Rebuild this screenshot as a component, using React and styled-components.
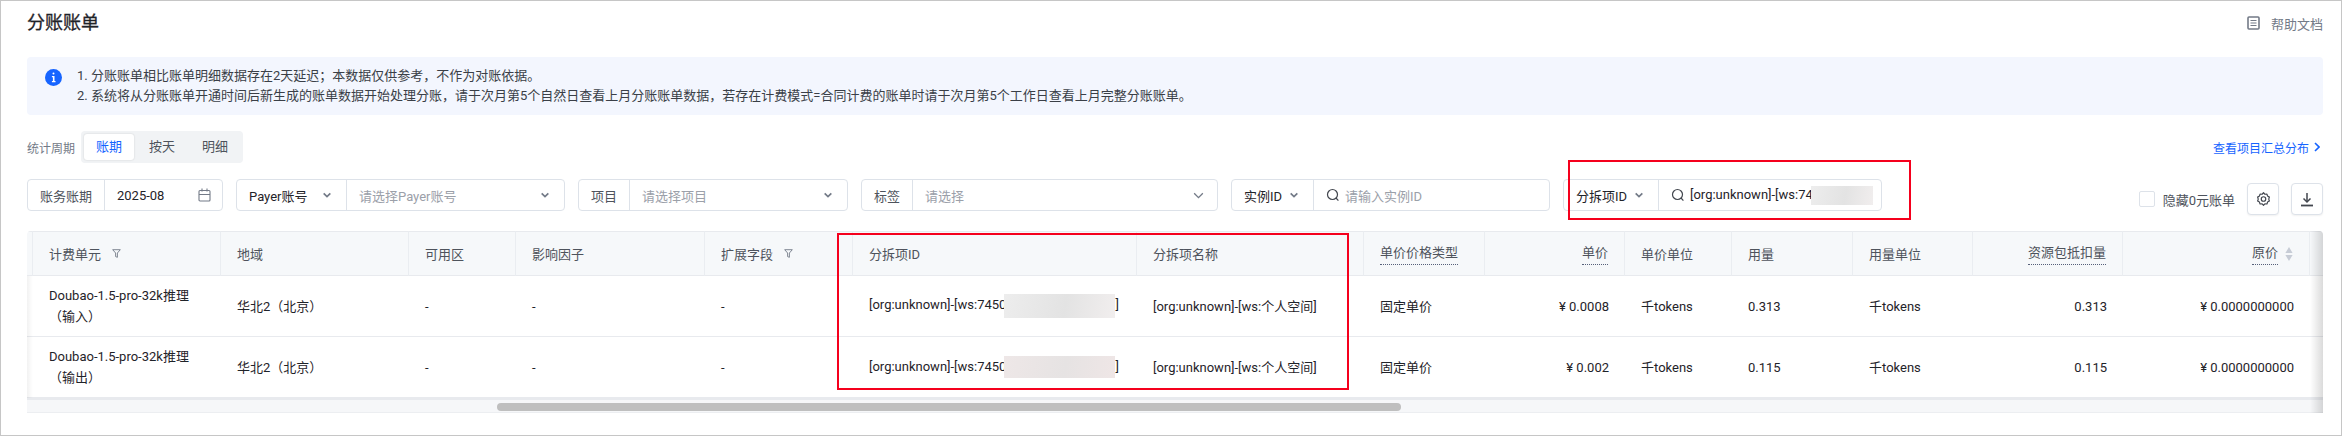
import React from "react";
import styled, { createGlobalStyle } from "styled-components";

const Global = createGlobalStyle`
  html, body { margin: 0; padding: 0; background: #fff; }
  body { font-family: Roboto, "Noto Sans CJK SC", sans-serif; font-size: 13px; color: #1f2329; }
  * { box-sizing: border-box; }
`;

const Page = styled.div`
  position: relative;
  width: 2342px;
  height: 436px;
  border: 1px solid #c6c6c6;
  padding: 0 18px 0 26px;
  overflow: hidden;
`;
const Header = styled.header`
  display: flex;
  align-items: center;
  justify-content: space-between;
  height: 44px;
`;
const Title = styled.h1`
  margin: 0;
  font-size: 18px;
  font-weight: 400;
  line-height: 24px;
  color: #1f2329;
  -webkit-text-stroke: 0.3px #1f2329;
`;
const HelpLink = styled.a`
  display: flex;
  align-items: center;
  gap: 11px;
  color: #737a87;
  font-size: 13px;
`;
const Alert = styled.section`
  display: flex;
  gap: 15px;
  height: 58px;
  margin-top: 12px;
  padding: 9px 18px;
  background: #f3f6fe;
  border-radius: 4px;
`;
const AlertIcon = styled.svg`
  width: 17px;
  height: 17px;
  margin-top: 3px;
  flex: none;
`;
const AlertText = styled.div`
  line-height: 20px;
  color: #3a3f47;
  font-size: 13px;
`;
const Toolbar = styled.div`
  display: flex;
  align-items: center;
  justify-content: space-between;
  height: 32px;
  margin-top: 16px;
`;
const PeriodGroup = styled.div`
  display: flex;
  align-items: center;
  gap: 6px;
`;
const PeriodLabel = styled.span`
  font-size: 12px;
  color: #737a87;
`;
const Segment = styled.div`
  display: flex;
  gap: 3px;
  height: 32px;
  padding: 3px;
  background: #f1f3f5;
  border-radius: 4px;
`;
const SegmentTab = styled.div`
  width: 50px;
  height: 26px;
  line-height: 26px;
  text-align: center;
  border-radius: 3px;
  color: ${(p) => (p.$active ? "#1664ff" : "#4e535c")};
  background: ${(p) => (p.$active ? "#fff" : "transparent")};
  box-shadow: ${(p) => (p.$active ? "0 0 2px rgba(0,0,0,.16)" : "none")};
`;
const SummaryLink = styled.a`
  display: flex;
  align-items: center;
  gap: 5px;
  font-size: 12px;
  color: #1664ff;
  margin-right: 3px;
`;
const FilterRow = styled.div`
  display: flex;
  align-items: flex-start;
  justify-content: space-between;
  height: 36px;
  margin-top: 16px;
`;
const Filters = styled.div`
  display: flex;
  gap: 13px;
`;
const FilterGroup = styled.div`
  display: flex;
  width: ${(p) => p.$width}px;
  height: 32px;
  border: 1px solid #dde2e9;
  border-radius: 4px;
  background: #fff;
`;
const FilterLabel = styled.div`
  display: flex;
  align-items: center;
  justify-content: space-between;
  flex: none;
  width: ${(p) => p.$width}px;
  padding: 0 14px 0 12px;
  border-right: 1px solid #dde2e9;
  white-space: nowrap;
  color: ${(p) => (p.$muted ? "#4e535c" : "#1f2329")};
`;
const FilterValue = styled.div`
  display: flex;
  align-items: center;
  justify-content: space-between;
  flex: 1;
  min-width: 0;
  padding: 0 ${(p) => p.$pr ?? 14}px 0 12px;
  white-space: nowrap;
  color: #1f2329;
`;
const Placeholder = styled.span`
  color: #9ba0a9;
`;
const SearchWrap = styled.span`
  display: flex;
  align-items: center;
  gap: 5px;
  color: #1f2329;
`;
const Patch = styled.span`
  display: inline-block;
  flex: none;
  vertical-align: middle;
  width: ${(p) => p.$w}px;
  height: ${(p) => p.$h}px;
  margin-left: -2px;
  background: ${(p) =>
    p.$tint
      ? "linear-gradient(100deg,#eee7e7,#e6e3e3 55%,#efe6e6)"
      : "linear-gradient(100deg,#ededed,#e3e3e3 55%,#f1eeee)"};
`;
const TableTools = styled.div`
  display: flex;
  align-items: center;
  margin-top: 4px;
  height: 32px;
`;
const HideCheck = styled.label`
  display: flex;
  align-items: center;
  gap: 8px;
  margin-right: 12px;
  color: #4e535c;
`;
const CheckBox = styled.span`
  width: 16px;
  height: 16px;
  border: 1px solid #dde2e9;
  border-radius: 2px;
`;
const IconButton = styled.button`
  display: flex;
  align-items: center;
  justify-content: center;
  width: 32px;
  height: 32px;
  padding: 0;
  margin-left: ${(p) => p.$ml || 0}px;
  border: 1px solid #dde2e9;
  border-radius: 4px;
  background: #fff;
  box-shadow: 0 1px 2px rgba(0, 0, 0, 0.06);
`;
const TableWrap = styled.div`
  position: relative;
  margin-top: 16px;
  border-radius: 4px 4px 0 0;
  overflow: hidden;
`;
const Table = styled.table`
  width: 2296px;
  table-layout: fixed;
  border-collapse: separate;
  border-spacing: 0;
`;
const Th = styled.th`
  height: 45px;
  padding: 0 ${(p) => (p.$edge ? 0 : 16)}px;
  font-size: 13px;
  font-weight: 400;
  color: #4e535c;
  background: #f6f8fa;
  text-align: ${(p) => p.$align || "left"};
  border-top: 1px solid #e8eaee;
  border-bottom: 1px solid #e8eaee;
  border-right: ${(p) => (p.$last ? "none" : "1px solid #eaedf1")};
  white-space: nowrap;
`;
const Td = styled.td`
  height: 61px;
  padding: 0 16px;
  font-size: 13px;
  line-height: 21px;
  color: #1f2329;
  text-align: ${(p) => p.$align || "left"};
  border-bottom: 1px solid #e8eaee;
  white-space: ${(p) => (p.$wrap ? "normal" : "nowrap")};
  overflow: hidden;
`;
const EdgeTd = styled.td`
  padding: 0;
  border-bottom: 1px solid #e8eaee;
`;
const HeadInner = styled.span`
  display: inline-flex;
  align-items: center;
  gap: 11px;
`;
const Tip = styled.span`
  display: inline-block;
  line-height: 20px;
  padding-bottom: 1px;
  border-bottom: 1px dotted #56607a;
`;
const SortIcon = styled.svg`
  width: 8px;
  height: 14px;
  margin-left: -4px;
`;
const Track = styled.div`
  height: 15px;
  padding: 3px 0 0 470px;
  background: #f6f7f9;
  border-top: 2px solid #e8eaee;
  border-bottom: 1px solid #eceef1;
`;
const Thumb = styled.div`
  width: 904px;
  height: 8px;
  border-radius: 4px;
  background: #bfbfbf;
`;
const ShadowLeft = styled.div`
  position: absolute;
  left: 0;
  top: 45px;
  bottom: 15px;
  width: 6px;
  background: linear-gradient(90deg, rgba(0, 0, 0, 0.05), transparent);
`;
const ShadowRight = styled.div`
  position: absolute;
  right: 0;
  top: 0;
  bottom: 0;
  width: 13px;
  background: linear-gradient(270deg, rgba(0, 0, 0, 0.14), transparent);
`;
const FilterHighlight = styled.div`
  position: absolute;
  left: 1567px;
  top: 159px;
  width: 343px;
  height: 60px;
  border: 2px solid #f5001d;
`;
const ColumnHighlight = styled.div`
  position: absolute;
  left: 836px;
  top: 232px;
  width: 512px;
  height: 157px;
  border: 2px solid #f5001d;
`;

const Chevron = ({ size = 10, thin }) => (
  <svg width={size} height={size} viewBox="0 0 12 12" fill="none">
    <path d="M2 4l4 4 4-4" stroke="#737a87" strokeWidth={thin ? 1.2 : 2} />
  </svg>
);
const SearchIcon = () => (
  <svg width="14" height="14" viewBox="0 0 14 14" fill="none" stroke="#42464e" strokeWidth="1.2">
    <circle cx="6.5" cy="6.5" r="5" />
    <path d="M10 10l2.4 2.6" />
  </svg>
);
const Calendar = () => (
  <svg width="13" height="14" viewBox="0 0 13 14" fill="none" stroke="#737a87" strokeWidth="1.1">
    <rect x="1" y="2.5" width="11" height="10.5" rx="1" />
    <path d="M1 6.5h11M4 .5v3M9 .5v3" />
  </svg>
);
const Funnel = () => (
  <svg width="9" height="9" viewBox="0 0 9 9" fill="none" stroke="#737a87" strokeWidth="0.9">
    <path d="M.7.7h7.6L5.4 4v4.3L3.6 7.6V4z" />
  </svg>
);

const columns = [
  { w: 6, edge: true },
  { w: 188, title: "计费单元", filter: true },
  { w: 188, title: "地域" },
  { w: 107, title: "可用区" },
  { w: 189, title: "影响因子" },
  { w: 148, title: "扩展字段", filter: true },
  { w: 284, title: "分拆项ID" },
  { w: 227, title: "分拆项名称" },
  { w: 121, title: "单价价格类型", tip: true },
  { w: 140, title: "单价", tip: true, align: "right" },
  { w: 107, title: "单价单位" },
  { w: 121, title: "用量" },
  { w: 120, title: "用量单位" },
  { w: 150, title: "资源包抵扣量", tip: true, align: "right" },
  { w: 187, title: "原价", tip: true, sort: true, align: "right" },
  { w: 13, edge: true, last: true },
];

const rows = [
  { unit: "Doubao-1.5-pro-32k推理（输入）", price: "¥ 0.0008", usage: "0.313", h: 24 },
  { unit: "Doubao-1.5-pro-32k推理（输出）", price: "¥ 0.002", usage: "0.115", h: 22, tint: true },
];

export default function App() {
  return (
    <Page>
      <Global />
      <Header>
        <Title>分账账单</Title>
        <HelpLink>
          <svg width="13" height="14" viewBox="0 0 13 14" fill="none" stroke="#737a87">
            <rect x="1" y="1" width="11" height="12" rx="1" strokeWidth="1.6" />
            <path d="M3.5 4.5h6M3.5 7h6M3.5 9.5h6" strokeWidth="1.1" />
          </svg>
          帮助文档
        </HelpLink>
      </Header>
      <Alert>
        <AlertIcon viewBox="0 0 17 17">
          <circle cx="8.5" cy="8.5" r="8.5" fill="#1664ff" />
          <rect x="7.5" y="3.6" width="2" height="2" rx="1" fill="#fff" />
          <path d="M6.9 7h2.6v5h1v1.2H6.9V12h1V8.2h-1z" fill="#fff" />
        </AlertIcon>
        <AlertText>
          <div>1. 分账账单相比账单明细数据存在2天延迟；本数据仅供参考，不作为对账依据。</div>
          <div>
            2. 系统将从分账账单开通时间后新生成的账单数据开始处理分账，请于次月第5个自然日查看上月分账账单数据，若存在计费模式=合同计费的账单时请于次月第5个工作日查看上月完整分账账单。
          </div>
        </AlertText>
      </Alert>
      <Toolbar>
        <PeriodGroup>
          <PeriodLabel>统计周期</PeriodLabel>
          <Segment>
            <SegmentTab $active>账期</SegmentTab>
            <SegmentTab>按天</SegmentTab>
            <SegmentTab>明细</SegmentTab>
          </Segment>
        </PeriodGroup>
        <SummaryLink>
          查看项目汇总分布
          <svg width="6" height="10" viewBox="0 0 6 10" fill="none">
            <path d="M1 1l4 4-4 4" stroke="#1664ff" strokeWidth="1.6" />
          </svg>
        </SummaryLink>
      </Toolbar>
      <FilterRow>
        <Filters>
          <FilterGroup $width={196}>
            <FilterLabel $width={77} $muted>账务账期</FilterLabel>
            <FilterValue $pr={11}>
              2025-08
              <Calendar />
            </FilterValue>
          </FilterGroup>
          <FilterGroup $width={329}>
            <FilterLabel $width={110}>
              Payer账号
              <Chevron />
            </FilterLabel>
            <FilterValue>
              <Placeholder>请选择Payer账号</Placeholder>
              <Chevron />
            </FilterValue>
          </FilterGroup>
          <FilterGroup $width={270}>
            <FilterLabel $width={51} $muted>项目</FilterLabel>
            <FilterValue>
              <Placeholder>请选择项目</Placeholder>
              <Chevron />
            </FilterValue>
          </FilterGroup>
          <FilterGroup $width={357}>
            <FilterLabel $width={51} $muted>标签</FilterLabel>
            <FilterValue $pr={12}>
              <Placeholder>请选择</Placeholder>
              <Chevron size={13} thin />
            </FilterValue>
          </FilterGroup>
          <FilterGroup $width={319}>
            <FilterLabel $width={82}>
              实例ID
              <Chevron />
            </FilterLabel>
            <FilterValue>
              <SearchWrap>
                <SearchIcon />
                <Placeholder>请输入实例ID</Placeholder>
              </SearchWrap>
            </FilterValue>
          </FilterGroup>
          <FilterGroup $width={319}>
            <FilterLabel $width={95}>
              分拆项ID
              <Chevron />
            </FilterLabel>
            <FilterValue>
              <SearchWrap>
                <SearchIcon />
                <span>
                  [org:unknown]-[ws:74
                  <Patch $w={62} $h={19} />
                </span>
              </SearchWrap>
            </FilterValue>
          </FilterGroup>
        </Filters>
        <TableTools>
          <HideCheck>
            <CheckBox />
            隐藏0元账单
          </HideCheck>
          <IconButton>
            <svg width="15" height="16" viewBox="0 0 24 24" fill="none" stroke="#42464e" strokeWidth="1.9" strokeLinejoin="round">
              <path d="M12 2l2.2 2.4 3.3-.3 1 3.2 2.9 1.7-1 3.1 1 3.1-2.9 1.7-1 3.1-3.3-.2L12 22l-2.2-2.2-3.3.2-1-3.1-2.9-1.7 1-3.1-1-3.1 2.9-1.7 1-3.2 3.3.3z" />
              <circle cx="12" cy="12" r="3.6" />
            </svg>
          </IconButton>
          <IconButton $ml={12}>
            <svg width="14" height="15" viewBox="0 0 14 15" fill="none" stroke="#42464e">
              <path d="M7 1v8.5" strokeWidth="1.5" />
              <path d="M3.5 6.5L7 10l3.5-3.5" strokeWidth="1.5" />
              <path d="M1 13.5h12" strokeWidth="1.8" />
            </svg>
          </IconButton>
        </TableTools>
      </FilterRow>
      <TableWrap>
        <Table>
          <colgroup>
            {columns.map((c, i) => (
              <col key={i} width={c.w} />
            ))}
          </colgroup>
          <thead>
            <tr>
              {columns.map((c, i) => (
                <Th key={i} $edge={c.edge} $last={c.last} $align={c.align}>
                  {c.title && (
                    <HeadInner>
                      {c.tip ? <Tip>{c.title}</Tip> : c.title}
                      {c.filter && <Funnel />}
                      {c.sort && (
                        <SortIcon viewBox="0 0 8 14">
                          <path d="M4 0l3.6 6H.4z" fill="#c7ccd6" />
                          <path d="M4 14L.4 8h7.2z" fill="#c7ccd6" />
                        </SortIcon>
                      )}
                    </HeadInner>
                  )}
                </Th>
              ))}
            </tr>
          </thead>
          <tbody>
            {rows.map((r) => (
              <tr key={r.unit}>
                <EdgeTd />
                <Td $wrap>{r.unit}</Td>
                <Td>华北2（北京）</Td>
                <Td>-</Td>
                <Td>-</Td>
                <Td>-</Td>
                <Td>
                  [org:unknown]-[ws:7450
                  <Patch $w={111} $h={r.h} $tint={r.tint} />]
                </Td>
                <Td>[org:unknown]-[ws:个人空间]</Td>
                <Td>固定单价</Td>
                <Td $align="right">{r.price}</Td>
                <Td>千tokens</Td>
                <Td>{r.usage}</Td>
                <Td>千tokens</Td>
                <Td $align="right">{r.usage}</Td>
                <Td $align="right">¥ 0.0000000000</Td>
                <EdgeTd />
              </tr>
            ))}
          </tbody>
        </Table>
        <Track>
          <Thumb />
        </Track>
        <ShadowLeft />
        <ShadowRight />
      </TableWrap>
      <FilterHighlight />
      <ColumnHighlight />
    </Page>
  );
}
